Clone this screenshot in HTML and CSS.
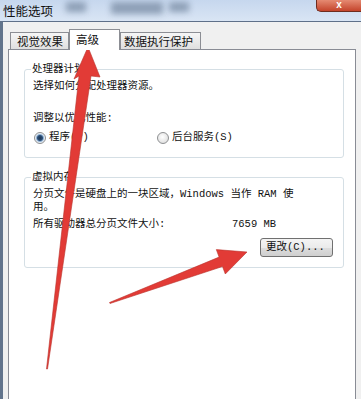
FILE: index.html
```html
<!DOCTYPE html>
<html lang="zh-CN">
<head>
<meta charset="UTF-8">
<meta name="viewport" content="width=device-width, initial-scale=1.0">
<title>性能选项</title>
<link rel="stylesheet" href="styles.css">
</head>
<body>

<div class="window">
    <div class="titlebar">
        <span class="title">性能选项</span>
        <span class="blur blur-a"></span>
        <span class="blur blur-b"></span>
        <span class="blur blur-c"></span>
        <span class="close">x</span>
    </div>

    <div class="frame">
        <div class="tabs">
            <div class="tab tab-visual">视觉效果</div>
            <div class="tab tab-adv active">高级</div>
            <div class="tab tab-dep">数据执行保护</div>
        </div>

        <div class="panel">
            <div class="group group-cpu">
                <div class="group-title">处理器计划</div>
                <p class="line gap-4">选择如何分配处理器资源。</p>
                <p class="line gap-19">调整以优化性能:</p>
                <div class="radios">
                    <label class="radio"><span class="dot checked"></span>程序(P)</label>
                    <label class="radio"><span class="dot"></span>后台服务(S)</label>
                </div>
            </div>

            <div class="group group-mem">
                <div class="group-title">虚拟内存</div>
                <p class="line gap-4">分页文件是硬盘上的一块区域，Windows 当作 RAM 使<br>用。</p>
                <div class="line gap-4 size-row">
                    <span class="size-label">所有驱动器总分页文件大小:</span>
                    <span>7659 MB</span>
                </div>
                <div class="actions">
                    <button type="button" class="btn">更改(C)...</button>
                </div>
            </div>
        </div>
    </div>
</div>

<!-- 红色箭头标注 -->
<svg class="arrows" width="361" height="399" viewBox="0 0 361 399">
    <polygon points="88,47 100,77 91,76 47.5,369 46.5,369 79,76 74,79" />
    <polygon points="247,252 225.3,274 222.5,266.5 110,303.5 109.5,302.5 219.1,257.1 216.3,249.6" />
</svg>

</body>
</html>
```

FILE: styles.css
```css
body {
    margin: 0;
    width: 361px;
    height: 399px;
    overflow: hidden;
    font-family: "Liberation Mono", "Noto Sans CJK SC", monospace;
    font-size: 10.5px;
    color: #111;
    background: #f0f0f0;
}
.window {
    display: flex;
    flex-direction: column;
    height: 399px;
}
.titlebar {
    display: flex;
    align-items: flex-start;
    height: 21px;
    border-bottom: 1px solid #5f7089;
    background: linear-gradient(to bottom, #c6d7ee, #d9e5f4);
}
.title {
    font-family: "Noto Sans CJK SC", sans-serif;
    font-size: 12.5px;
    line-height: 21px;
    padding-left: 3px;
    color: #111;
}
.blur {
    height: 10px;
    margin-top: 2px;
    background: #7e90a8;
    filter: blur(3px);
    opacity: 0.8;
}
.blur-a {
    width: 20px;
    margin-left: 13px;
}
.blur-b {
    width: 52px;
    height: 12px;
    margin-left: 25px;
}
.blur-c {
    width: 20px;
    margin-left: 6px;
}
.close {
    margin-left: auto;
    width: 45px;
    height: 12px;
    box-sizing: border-box;
    border: 1px solid #6f2c1e;
    border-top: none;
    border-right: none;
    border-radius: 0 0 0 5px;
    background: linear-gradient(to bottom, #e58a72, #c4442b);
    color: #fff;
    font-family: "Liberation Sans", sans-serif;
    font-weight: bold;
    font-size: 10px;
    line-height: 10px;
    text-align: center;
}
.frame {
    flex: 1;
    display: flex;
    flex-direction: column;
    border-left: 3px solid #62748c;
    padding: 7px 5px 0 5px;
    background: #f0f0f0;
}
.tabs {
    display: flex;
    align-items: flex-end;
    height: 21px;
    padding-left: 2px;
    margin-bottom: -1px;
    position: relative;
    z-index: 1;
}
.tab {
    box-sizing: border-box;
    height: 17px;
    margin-bottom: 1px;
    border: 1px solid #8c8e94;
    border-bottom: none;
    background: linear-gradient(to bottom, #f6f6f6, #dfdfdf);
    font-family: "Noto Sans CJK SC", sans-serif;
    font-size: 11.5px;
    line-height: 16px;
    padding-left: 6px;
    white-space: nowrap;
}
.tab-visual {
    width: 59px;
}
.tab-adv {
    width: 51px;
}
.tab-dep {
    width: 81px;
    padding-left: 3px;
}
.tab.active {
    height: 21px;
    margin-bottom: 0;
    background: #fff;
    line-height: 18px;
}
.panel {
    flex: 1;
    background: #fff;
    border: 1px solid #898c95;
    border-bottom: none;
    padding: 0 0 0 15px;
}
.group {
    width: 320px;
    box-sizing: border-box;
    border: 1px solid #d5dfe5;
    border-radius: 3px;
    padding: 0 8px;
}
.group-cpu {
    margin-top: 19px;
    padding-bottom: 13px;
}
.group-mem {
    margin-top: 19px;
    padding-bottom: 10px;
}
.group-title {
    width: fit-content;
    margin: -7px 0 0 -2px;
    padding: 0 1px;
    background: #fff;
    line-height: 13px;
}
.line {
    margin: 0;
    line-height: 13px;
    white-space: nowrap;
}
.gap-4 {
    margin-top: 4px;
}
.gap-19 {
    margin-top: 19px;
}
.radios {
    display: flex;
    margin-top: 6px;
    line-height: 13px;
}
.radio {
    display: flex;
    align-items: center;
    width: 123px;
}
.dot {
    width: 12px;
    height: 12px;
    box-sizing: border-box;
    margin: 1px 3px 0 1px;
    border: 1px solid #8e9092;
    border-radius: 50%;
    background: radial-gradient(circle at 45% 40%, #ffffff, #d6d6d6);
}
.dot.checked {
    background: radial-gradient(circle, #1c3450 0, #2c4f78 2.5px, #8fb0d2 3.5px, #e8eef4 4.5px, #f4f4f4 6px);
}
.size-row {
    display: flex;
}
.size-label {
    width: 199px;
}
.actions {
    display: flex;
    justify-content: flex-end;
    margin-top: 7px;
    padding-right: 2px;
}
.btn {
    width: 73px;
    height: 19px;
    box-sizing: border-box;
    border: 1px solid #707070;
    border-radius: 3px;
    background: linear-gradient(to bottom, #f4f4f4 0%, #ebebeb 50%, #dddddd 51%, #cfcfcf 100%);
    font-family: inherit;
    font-size: 10.5px;
    color: #111;
    text-align: left;
    padding: 0 0 0 5px;
    line-height: 17px;
}
.arrows {
    position: absolute;
    top: 0;
    left: 0;
    pointer-events: none;
}
.arrows polygon {
    fill: #e23b36;
    stroke: #b8322c;
    stroke-width: 0.6;
}
```
